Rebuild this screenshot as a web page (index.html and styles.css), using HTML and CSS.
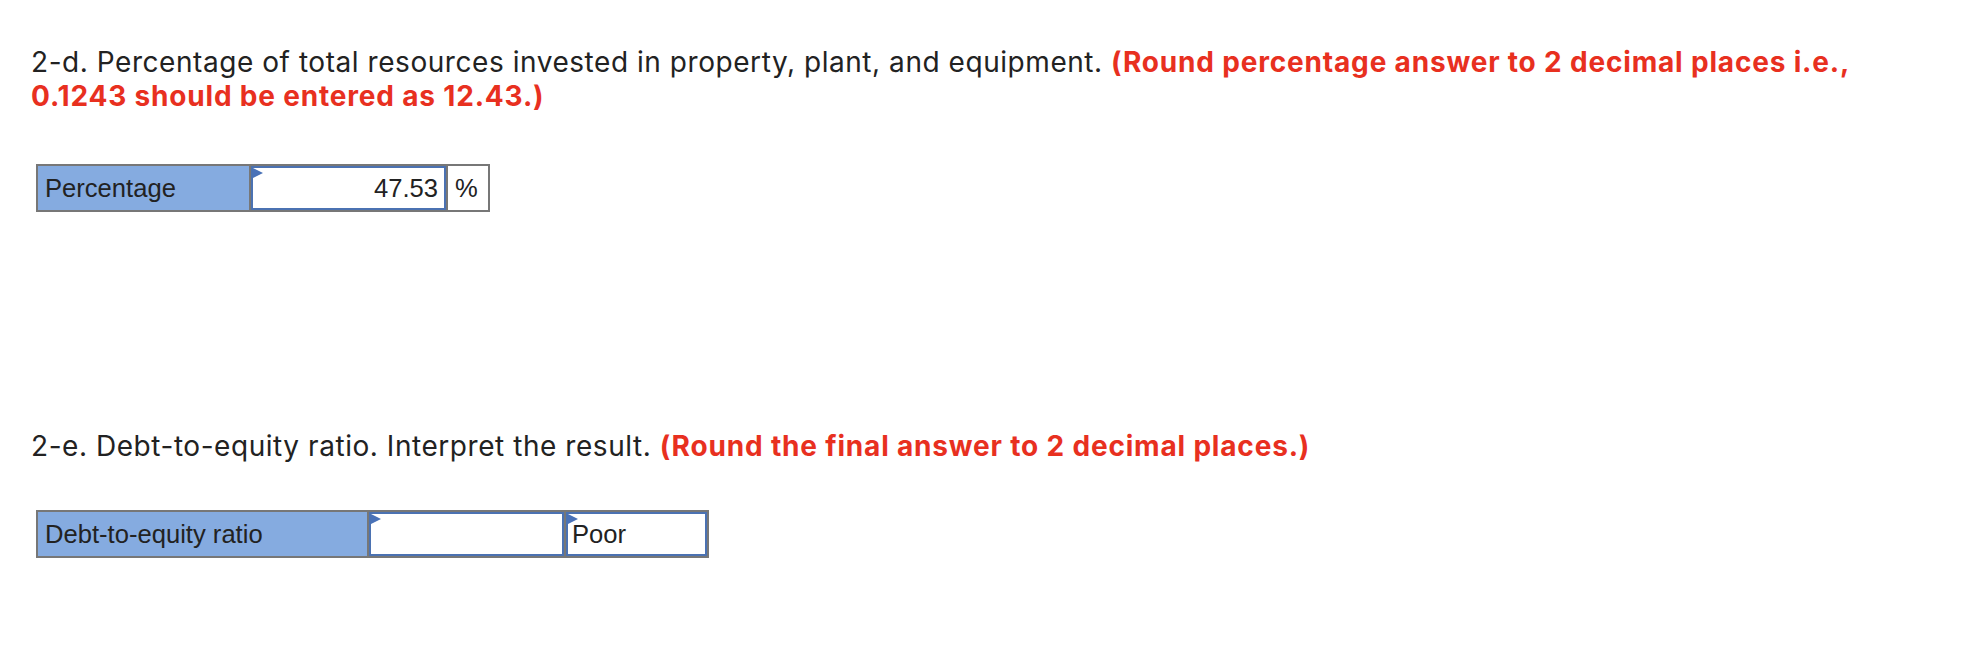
FILE: index.html
```html
<!DOCTYPE html>
<html lang="en">
<head>
<meta charset="utf-8">
<title>Ratios</title>
<link rel="stylesheet" href="styles.css">
</head>
<body>
<main class="page">
  <section class="question q-first">
    <p class="prompt">2-d. Percentage of total resources invested in property, plant, and equipment. <strong class="hint">(Round percentage answer to 2 decimal places i.e., 0.1243 should be entered as 12.43.)</strong></p>
    <div class="answer-table">
      <div class="cell label label-short">Percentage</div>
      <div class="cell slot slot-num"><div class="field field-num">47.53</div></div>
      <div class="cell unit">%</div>
    </div>
  </section>
  <section class="question q-second">
    <p class="prompt">2-e. Debt-to-equity ratio. Interpret the result. <strong class="hint">(Round the final answer to 2 decimal places.)</strong></p>
    <div class="answer-table">
      <div class="cell label label-long">Debt-to-equity ratio</div>
      <div class="cell slot slot-num"><div class="field field-num"></div></div>
      <div class="cell slot slot-select"><div class="field field-select">Poor</div></div>
    </div>
  </section>
</main>
</body>
</html>
```
FILE: styles.css
```css
html, body {
  margin: 0;
  padding: 0;
  background: #ffffff;
}

.page {
  padding: 45px 0 0 31px;
}

.question {
  display: flex;
  flex-direction: column;
  align-items: flex-start;
}

.q-second {
  margin-top: 217px;
}

.prompt {
  margin: 0;
  width: 1870px;
  font-family: "Inter", "Open Sans", sans-serif;
  font-size: 28px;
  line-height: 34px;
  letter-spacing: 0.55px;
  color: #222222;
}

.hint {
  font-weight: 700;
  letter-spacing: 0.82px;
  color: #e8301f;
}

.answer-table {
  display: flex;
  margin: 51px 0 0 5px;
  border: 2px solid #777777;
  font-family: "Liberation Sans", Arial, sans-serif;
  font-size: 25.6px;
  letter-spacing: 0;
  color: #222222;
}

.q-second .answer-table {
  margin-top: 47px;
}

.cell {
  box-sizing: border-box;
  height: 44px;
  display: flex;
  align-items: center;
}

.cell + .cell {
  border-left: 2px solid #777777;
}

.label {
  background: #85abe0;
  padding-left: 7px;
}

.label-short {
  width: 211px;
}

.label-long {
  width: 329px;
}

.slot {
  align-items: stretch;
}

.slot-num {
  width: 197px;
}

.slot-select {
  width: 143px;
}

.field {
  position: relative;
  box-sizing: border-box;
  flex: 1;
  display: flex;
  align-items: center;
  border: 2px solid #4b72b2;
  background: #ffffff;
}

.field::before {
  content: "";
  position: absolute;
  top: 0;
  left: 0;
  border-top: 5px solid transparent;
  border-bottom: 5px solid transparent;
  border-left: 10px solid #4a72b8;
}

.field-num {
  justify-content: flex-end;
  padding-right: 6px;
}

.field-select {
  padding-left: 4px;
}

.unit {
  width: 42px;
  padding-left: 7px;
  background: #ffffff;
}
```
